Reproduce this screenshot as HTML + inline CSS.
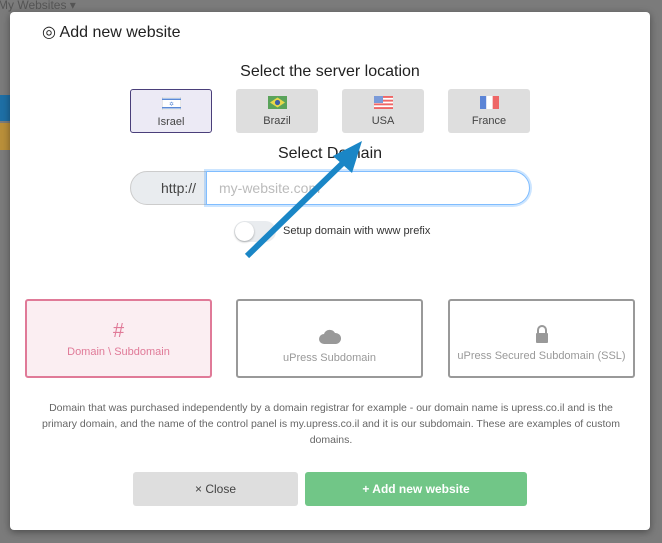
<!DOCTYPE html>
<html><head><meta charset="utf-8"><style>
*{box-sizing:border-box;margin:0;padding:0}
body{width:662px;height:543px;overflow:hidden;background:#7b7b7b;font-family:"Liberation Sans",sans-serif;position:relative}
.a{position:absolute}
.modal{left:10px;top:12px;width:640px;height:518px;background:#fff;border-radius:4px;box-shadow:0 2px 8px rgba(0,0,0,.4)}
.c{text-align:center}
.loc{top:89px;width:82px;height:44px;background:#dedede;border-radius:3px;font-size:11px;color:#444;text-align:center}
.loc .f{width:19px;height:13px;margin:7px auto 6px;display:block}
.opt{top:299px;width:187px;height:79px;border:2px solid #999;border-radius:3px;text-align:center;font-size:11px;color:#999}
</style></head><body>
<div class="a" style="color:#555;font-size:12px;left:-2px;top:-2px">My Websites ▾</div>
<div class="a" style="left:0;top:95px;width:10px;height:26px;background:#1e6fa5"></div>
<div class="a" style="left:0;top:123px;width:10px;height:27px;background:#b98f3a"></div>
<div class="a modal"></div>
<div class="a" style="left:42px;top:22px;font-size:16px;color:#222">◎ Add new website</div>
<div class="a c" style="left:10px;width:640px;top:63px;font-size:16px;color:#222">Select the server location</div>
<div class="a loc" style="left:130px;background:#eceaf5;border:1px solid #4a3f7a"><svg class="f" viewBox="0 0 19 13"><rect width="19" height="13" fill="#fff" stroke="#ccc"/><rect y="1.5" width="19" height="1.5" fill="#5b8ad6"/><rect y="10" width="19" height="1.5" fill="#5b8ad6"/><text x="9.5" y="9" font-size="6" text-anchor="middle" fill="#5b8ad6">✡</text></svg>Israel</div>
<div class="a loc" style="left:236px"><svg class="f" viewBox="0 0 19 13"><rect width="19" height="13" fill="#5aa35a"/><path d="M9.5 1.5L17 6.5 9.5 11.5 2 6.5z" fill="#e8d84a"/><circle cx="9.5" cy="6.5" r="2.6" fill="#3d5fa8"/></svg>Brazil</div>
<div class="a loc" style="left:342px"><svg class="f" viewBox="0 0 19 13"><rect width="19" height="13" fill="#fff"/><g fill="#e66"><rect y="0" width="19" height="1.9"/><rect y="3.7" width="19" height="1.9"/><rect y="7.4" width="19" height="1.9"/><rect y="11.1" width="19" height="1.9"/></g><rect width="9" height="7" fill="#7a9ad8"/></svg>USA</div>
<div class="a loc" style="left:448px"><svg class="f" viewBox="0 0 19 13"><rect width="6.3" height="13" fill="#5b84d6"/><rect x="6.3" width="6.4" height="13" fill="#fff"/><rect x="12.7" width="6.3" height="13" fill="#e66"/></svg>France</div>
<div class="a c" style="left:10px;width:640px;top:145px;font-size:16px;color:#222">Select Domain</div>
<div class="a" style="left:130px;top:171px;width:80px;height:34px;background:#e9ecef;border:1px solid #ccc;border-radius:17px 0 0 17px;font-size:14px;color:#444;padding:8px 0 0 30px">http://</div>
<div class="a" style="left:206px;top:171px;width:324px;height:34px;border:1px solid #80bdff;border-radius:0 17px 17px 0;box-shadow:0 0 0 2px rgba(0,123,255,.2);font-size:14px;color:#bbb;padding:8px 0 0 12px;background:#fff">my-website.com</div>
<div class="a" style="left:234px;top:221px;width:42px;height:21px;border-radius:11px;background:#e9ecef"></div>
<div class="a" style="left:235px;top:222px;width:19px;height:19px;border-radius:50%;background:#fff;box-shadow:0 1px 2px rgba(0,0,0,.3)"></div>
<div class="a" style="left:283px;top:225px;font-size:11px;color:#333">Setup domain with www prefix</div>
<div class="a opt" style="left:25px;border-color:#e07a98;background:#fbeef2;color:#e07a98"><div style="font-size:20px;margin-top:19px;height:26px">#</div>Domain \ Subdomain</div>
<div class="a opt" style="left:236px"><svg width="22" height="14" viewBox="0 0 22 14" style="margin-top:24px;height:24px"><path d="M5 14a5 5 0 010-10 6 6 0 0111-1 5 5 0 011 11z" fill="#999"/></svg><div>uPress Subdomain</div></div>
<div class="a opt" style="left:448px"><svg width="14" height="18" viewBox="0 0 14 18" style="margin-top:20px;height:26px"><path d="M3 8V5a4 4 0 018 0v3" fill="none" stroke="#999" stroke-width="2"/><rect x="1" y="8" width="12" height="10" rx="1" fill="#999"/></svg><div>uPress Secured Subdomain (SSL)</div></div>
<div class="a c" style="left:36px;width:590px;top:400px;font-size:10.5px;line-height:16px;color:#666">Domain that was purchased independently by a domain registrar for example - our domain name is upress.co.il and is the primary domain, and the name of the control panel is my.upress.co.il and it is our subdomain. These are examples of custom domains.</div>
<div class="a c" style="left:133px;top:472px;width:165px;height:34px;background:#dedede;border-radius:3px;font-size:12px;color:#444;line-height:34px">× Close</div>
<div class="a c" style="left:305px;top:472px;width:222px;height:34px;background:#71c687;border-radius:3px;font-size:12px;color:#fff;font-weight:bold;line-height:34px">+ Add new website</div>
<svg class="a" style="left:0;top:0" width="662" height="543"><line x1="247" y1="256" x2="346" y2="160" stroke="#1a86c6" stroke-width="6"/><path d="M362 141L333 156 352 173z" fill="#1a86c6"/></svg>
</body></html>
